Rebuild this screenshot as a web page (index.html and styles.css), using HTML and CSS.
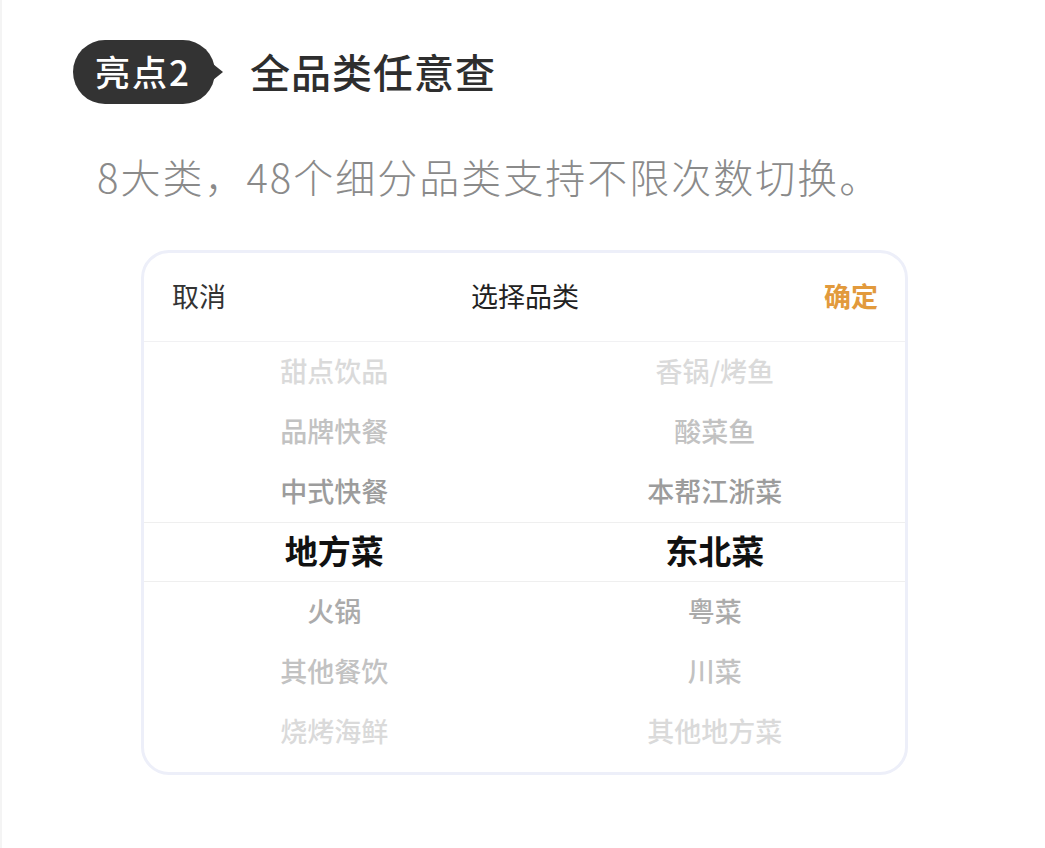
FILE: index.html
```html
<!DOCTYPE html>
<html lang="zh-CN">
<head>
<meta charset="UTF-8">
<meta name="viewport" content="width=device-width, initial-scale=1.0">
<title>全品类任意查</title>
<link rel="stylesheet" href="styles.css">
</head>

<body>
  <div class="page">
    <div class="heading">
      <span class="badge">亮点2</span>
      <h1 class="title">全品类任意查</h1>
    </div>

    <p class="subtitle">8大类，48个细分品类支持不限次数切换。</p>

    <div class="picker">
      <div class="picker-bar">
        <span class="cancel">取消</span>
        <span class="picker-title">选择品类</span>
        <span class="confirm">确定</span>
      </div>

      <div class="picker-rows">
        <div class="row fade-3"><span>甜点饮品</span><span>香锅/烤鱼</span></div>
        <div class="row fade-2"><span>品牌快餐</span><span>酸菜鱼</span></div>
        <div class="row fade-1"><span>中式快餐</span><span>本帮江浙菜</span></div>
        <div class="row selected"><span>地方菜</span><span>东北菜</span></div>
        <div class="row fade-1b"><span>火锅</span><span>粤菜</span></div>
        <div class="row fade-2"><span>其他餐饮</span><span>川菜</span></div>
        <div class="row fade-3"><span>烧烤海鲜</span><span>其他地方菜</span></div>
      </div>
    </div>
  </div>
</body>
</html>
```

FILE: styles.css
```css
* {
  box-sizing: border-box;
  margin: 0;
  padding: 0;
}

body {
  font-family: "Noto Sans CJK SC", "Noto Sans", sans-serif;
  background-color: #fff;
  color: #333;
  border-left: 2px solid #f4f4f4;
  min-height: 848px;
}

.page {
  padding: 40px 0 0 71px;
}

.heading {
  display: flex;
  align-items: center;
  gap: 35px;
  height: 64px;
}

.badge {
  position: relative;
  display: flex;
  align-items: center;
  width: 142px;
  height: 64px;
  padding: 0 0 3px 22px;
  background-color: #333;
  border-radius: 32px;
  color: #fff;
  font-size: 35px;
  font-weight: 500;
  letter-spacing: 2px;
}

.badge::after {
  content: "";
  position: absolute;
  right: -8px;
  top: 24px;
  border-top: 8px solid transparent;
  border-bottom: 8px solid transparent;
  border-left: 10px solid #333;
}

.title {
  font-size: 40px;
  font-weight: 500;
  color: #2e2e2e;
  line-height: 64px;
  letter-spacing: 1px;
  padding-bottom: 3px;
}

.subtitle {
  margin: 44px 0 0 24px;
  font-size: 40px;
  line-height: 56px;
  color: #8a8a8a;
  font-weight: 300;
  letter-spacing: 2px;
}

.picker {
  margin: 46px 0 0 68px;
  width: 767px;
  border: 3px solid #edeff9;
  border-radius: 28px;
  padding-bottom: 10px;
  background-color: #fff;
}

.picker-bar {
  display: flex;
  align-items: center;
  justify-content: space-between;
  height: 89px;
  padding: 0 27px 4px 28px;
  border-bottom: 1px solid #f1f1f3;
  font-size: 27px;
}

.cancel {
  color: #333;
  width: 60px;
}

.picker-title {
  color: #222;
}

.confirm {
  color: #e29a3c;
  font-weight: 700;
  width: 60px;
  text-align: right;
}

.row {
  display: grid;
  grid-template-columns: 1fr 1fr;
  height: 60px;
  padding-bottom: 4px;
  align-items: center;
  text-align: center;
  font-size: 27px;
  font-weight: 500;
}

.row.fade-3 {
  color: #dadada;
}

.row.fade-2 {
  color: #c2c2c2;
}

.row.fade-1 {
  color: #9c9c9c;
}

.row.fade-1b {
  color: #ababab;
}

.row.selected {
  border-top: 1px solid #efefef;
  border-bottom: 1px solid #efefef;
  color: #111;
  font-size: 33px;
  font-weight: 700;
}
```
